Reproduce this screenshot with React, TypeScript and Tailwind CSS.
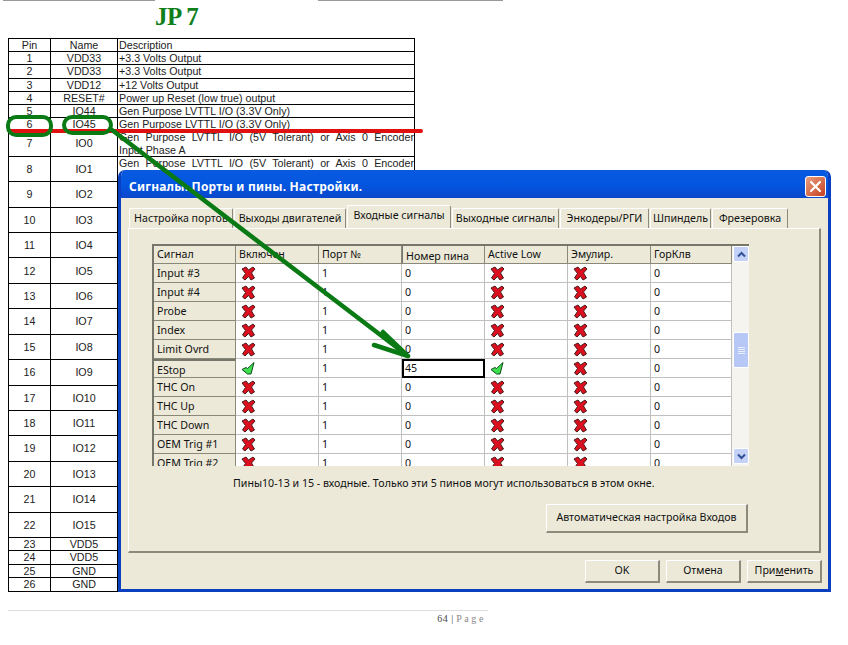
import type { ReactNode } from "react";

const pins = [
  ["1", "VDD33", "+3.3 Volts Output"],
  ["2", "VDD33", "+3.3 Volts Output"],
  ["3", "VDD12", "+12 Volts Output"],
  ["4", "RESET#", "Power up Reset (low true) output"],
  ["5", "IO44", "Gen Purpose LVTTL I/O (3.3V Only)"],
  ["6", "IO45", "Gen Purpose LVTTL I/O (3.3V Only)"],
];

// only rows 7 and 8 show a description, the dialog covers the others
const tallPins = [
  ["7", "IO0", "Input Phase A"],
  ["8", "IO1", "-"],
  ["9", "IO2", ""],
  ["10", "IO3", ""],
  ["11", "IO4", ""],
  ["12", "IO5", ""],
  ["13", "IO6", ""],
  ["14", "IO7", ""],
  ["15", "IO8", ""],
  ["16", "IO9", ""],
  ["17", "IO10", ""],
  ["18", "IO11", ""],
  ["19", "IO12", ""],
  ["20", "IO13", ""],
  ["21", "IO14", ""],
  ["22", "IO15", ""],
];

const powerPins = [
  ["23", "VDD5"],
  ["24", "VDD5"],
  ["25", "GND"],
  ["26", "GND"],
];

const tabs = [
  { label: "Настройка портов", width: "w-[104px]" },
  { label: "Выходы двигателей", width: "w-[112px]" },
  { label: "Входные сигналы", width: "w-[104px]", active: true },
  { label: "Выходные сигналы", width: "w-[107px]" },
  { label: "Энкодеры/РГИ", width: "w-[89px]" },
  { label: "Шпиндель", width: "w-[61px]" },
  { label: "Фрезеровка", width: "w-[76px]" },
];

const signals = [
  "Input #3",
  "Input #4",
  "Probe",
  "Index",
  "Limit Ovrd",
  "EStop",
  "THC On",
  "THC Up",
  "THC Down",
  "OEM Trig #1",
  "OEM Trig #2",
];

function RedCross() {
  return (
    <svg width="15" height="15" viewBox="0 0 15 15" className="block">
      <path
        d="M1 3 L5 1 L7.5 4 L12 1 L14 3 L10.5 7 L13.5 12 L10 14 L7.5 10.5 L4 14 L1.5 12 L4.5 7.5 Z"
        fill="#dc0f1e"
        stroke="#4a1c1c"
        strokeWidth="1"
      />
    </svg>
  );
}

function GreenCheck() {
  return (
    <svg width="15" height="15" viewBox="0 0 15 15" className="block">
      <path
        d="M1 8.5 L5 6.5 L6.5 7.5 L13 1.5 L10 13 L6.5 13 Z"
        fill="#3fe04f"
        stroke="#0c4a1c"
        strokeWidth="1"
      />
    </svg>
  );
}

function HeaderCell({ label, sunken }: { label: string; sunken?: boolean }) {
  return (
    <div
      className={`h-[18px] border-r border-b border-[#8a8878] bg-[#ece9d8] pl-[3px] leading-[17px] ${
        sunken ? "border-l border-l-[#77766a] pt-[2px]" : ""
      }`}
    >
      {label}
    </div>
  );
}

function SignalRow({ name }: { name: string }) {
  const isEstop = name === "EStop";
  const Mark = isEstop ? GreenCheck : RedCross;
  return (
    <>
      <div
        className={`h-[19px] border-b border-r border-[#8a8878] bg-[#ece9d8] pl-[3px] leading-[18px] ${
          isEstop ? "border-t-2 border-t-[#77766a]" : ""
        }`}
      >
        {name}
      </div>
      <div className="flex h-[19px] items-center border-r border-b border-[#c0c0c0] bg-white pl-[5px]">
        <Mark />
      </div>
      <div className="h-[19px] border-r border-b border-[#c0c0c0] bg-white pl-[3px] leading-[18px]">1</div>
      {isEstop ? (
        <div className="h-[19px] border-2 border-black bg-white pl-[1px] leading-[15px]">45</div>
      ) : (
        <div className="h-[19px] border-r border-b border-[#c0c0c0] bg-white pl-[3px] leading-[18px]">0</div>
      )}
      <div className="flex h-[19px] items-center border-r border-b border-[#c0c0c0] bg-white pl-[5px]">
        <Mark />
      </div>
      <div className="flex h-[19px] items-center border-r border-b border-[#c0c0c0] bg-white pl-[5px]">
        <RedCross />
      </div>
      <div className="h-[19px] border-r border-b border-[#c0c0c0] bg-white pl-[3px] leading-[18px]">0</div>
    </>
  );
}

function XpButton({ label, className }: { label: ReactNode; className: string }) {
  return (
    <div
      className={`flex items-center justify-center border-t border-l border-t-white border-l-white border-r-2 border-b-2 border-r-[#8c8a7c] border-b-[#8c8a7c] bg-[#ece9d8] ${className}`}
    >
      {label}
    </div>
  );
}

function Scrollbar() {
  return (
    <div className="flex w-[17px] shrink-0 flex-col bg-[#f5f4ee] pb-[2px] pl-[1px]">
      <div className="flex h-[16px] items-center justify-center rounded-[2px] border border-white bg-[#c3d2f6]">
        <svg width="9" height="7" viewBox="0 0 9 7">
          <path d="M1 5.5 L4.5 2 L8 5.5" fill="none" stroke="#2f4f96" strokeWidth="2" />
        </svg>
      </div>
      <div className="mt-[70px] flex h-[36px] flex-col items-center justify-center gap-[1px] rounded-[2px] border border-white bg-[#b7c8f6]">
        <div className="h-[1px] w-[7px] bg-[#e8eefc]" />
        <div className="h-[1px] w-[7px] bg-[#e8eefc]" />
        <div className="h-[1px] w-[7px] bg-[#e8eefc]" />
        <div className="h-[1px] w-[7px] bg-[#e8eefc]" />
      </div>
      <div className="mt-auto flex h-[16px] items-center justify-center rounded-[2px] border border-white bg-[#c3d2f6]">
        <svg width="9" height="7" viewBox="0 0 9 7">
          <path d="M1 1.5 L4.5 5 L8 1.5" fill="none" stroke="#2f4f96" strokeWidth="2" />
        </svg>
      </div>
    </div>
  );
}

function Dialog() {
  return (
    <div className="absolute top-[170px] left-[118px] flex h-[422px] w-[713px] flex-col overflow-hidden rounded-t-[7px] border-r-[3px] border-b-[3px] border-l-[3px] border-[#0a3fc0] bg-[#ece9d8] font-['Noto_Sans','DejaVu_Sans',sans-serif] text-[10.65px] text-[#111]">
      <div className="mx-[-3px] flex h-[28px] shrink-0 items-center justify-between bg-gradient-to-b from-[#0a5ae0] via-[#0256e0] to-[#0a48cc] pt-[5px] pr-[5px] pl-[11px]">
        <span className="font-['Noto_Sans',sans-serif] text-[12px] font-bold tracking-[0.2px] text-white">
          Сигналы. Порты и пины. Настройки.
        </span>
        <div className="flex h-[21px] w-[21px] items-center justify-center rounded-[3px] border border-white bg-gradient-to-br from-[#e8a080] to-[#c43a18]">
          <svg width="13" height="13" viewBox="0 0 13 13">
            <path d="M2 2 L11 11 M11 2 L2 11" stroke="white" strokeWidth="2.2" strokeLinecap="round" />
          </svg>
        </div>
      </div>

      <div className="flex h-[30px] shrink-0 items-end gap-[1px] pl-2">
        {tabs.map((tab) => (
          <div
            key={tab.label}
            className={`flex items-center justify-center rounded-t-[2px] border-t border-l border-t-white border-l-white border-r border-r-[#8c8a7c] whitespace-nowrap ${tab.width} ${
              tab.active ? "relative z-10 h-[23px] bg-[#ece9d8] pb-[3px]" : "h-[20px] bg-[#ece9d8]"
            }`}
          >
            {tab.label}
          </div>
        ))}
      </div>

      <div className="mr-[7px] ml-[7px] flex h-[325px] shrink-0 flex-col border-t border-l border-t-white border-l-white border-r-2 border-b-2 border-r-[#8c8a7c] border-b-[#8c8a7c] pt-[15px] pl-[23px]">
        <div className="flex h-[222px] w-[597px] shrink-0 overflow-hidden border-t-2 border-l-2 border-t-[#77766a] border-l-[#77766a]">
          <div className="grid h-fit w-[578px] shrink-0 grid-cols-[82px_83px_83px_83px_83px_83px_81px]">
            <HeaderCell label="Сигнал" />
            <HeaderCell label="Включен" />
            <HeaderCell label="Порт №" />
            <HeaderCell label="Номер пина" sunken />
            <HeaderCell label="Active Low" />
            <HeaderCell label="Эмулир." />
            <HeaderCell label="ГорКлв" />
            {signals.map((name) => (
              <SignalRow key={name} name={name} />
            ))}
          </div>
          <Scrollbar />
        </div>
        <div className="mt-[10px] pl-[81px] leading-[14px]">
          Пины10-13 и 15 - входные. Только эти 5 пинов могут использоваться в этом окне.
        </div>
        <div className="mt-[14px] flex justify-end pr-[71px]">
          <XpButton label="Автоматическая настройка Входов" className="h-[29px] w-[202px]" />
        </div>
      </div>

      <div className="mt-[7px] flex gap-[6px] pl-[464px]">
        <XpButton label="OK" className="h-[23px] w-[75px]" />
        <XpButton label="Отмена" className="h-[23px] w-[75px]" />
        <XpButton
          label={
            <span>
              При<span className="underline">м</span>енить
            </span>
          }
          className="h-[23px] w-[75px]"
        />
      </div>
    </div>
  );
}

function Annotations() {
  return (
    <svg width="848" height="645" viewBox="0 0 848 645" className="pointer-events-none absolute top-0 left-0">
      <path d="M10 131 H421" stroke="#e01010" strokeWidth="4" strokeLinecap="round" />
      <rect x="8" y="117" width="43" height="18" rx="8" fill="none" stroke="#0a7a14" strokeWidth="4" />
      <rect x="64" y="117" width="47" height="16" rx="8" fill="none" stroke="#0a7a14" strokeWidth="4" />
      <path
        d="M112 130 L408 356 M408 356 L374 345 M408 356 L383 332"
        fill="none"
        stroke="#0a7a14"
        strokeWidth="4.5"
        strokeLinecap="round"
      />
    </svg>
  );
}

export default function App() {
  return (
    <div className="relative h-[645px] w-[848px] overflow-hidden bg-white font-['Liberation_Sans',sans-serif] text-[10.7px] text-[#222]">
      <div className="flex h-[1px] pl-[3px]">
        <div className="h-[1px] w-[152px] bg-[#999]" />
        <div className="ml-[163px] h-[1px] w-[185px] bg-[#999]" />
      </div>
      <div className="h-[37px] pt-[1px] pl-[155px] font-['Liberation_Serif',serif] text-[25px] leading-[29px] font-bold tracking-[-0.5px] text-[#0f7f1c]">
        JP 7
      </div>

      <div className="ml-2 w-[407px] border border-black">
        <div className="grid h-[13.2px] grid-cols-[42px_67px_1fr] border-b border-black leading-[12px]">
          <div className="border-r border-black text-center">Pin</div>
          <div className="border-r border-black text-center">Name</div>
          <div className="pl-[1px]">Description</div>
        </div>
        {pins.map(([pin, name, desc]) => (
          <div key={pin} className="grid h-[13.2px] grid-cols-[42px_67px_1fr] border-b border-black leading-[12px]">
            <div className="border-r border-black text-center">{pin}</div>
            <div className="border-r border-black text-center">{name}</div>
            <div className="pl-[1px]">{desc}</div>
          </div>
        ))}
        {tallPins.map(([pin, name, second]) => (
          <div key={pin} className="grid h-[25.43px] grid-cols-[42px_67px_1fr] border-b border-black leading-[12.2px]">
            <div className="flex items-center justify-center border-r border-black">{pin}</div>
            <div className="flex items-center justify-center border-r border-black">{name}</div>
            <div className="pl-[1px]">
              {second && (
                <p className="[text-align-last:justify]">Gen Purpose LVTTL I/O (5V Tolerant) or Axis 0 Encoder</p>
              )}
              {second && second !== "-" && <p>{second}</p>}
            </div>
          </div>
        ))}
        {powerPins.map(([pin, name]) => (
          <div key={pin} className="grid h-[13.25px] grid-cols-[42px_67px_1fr] border-b border-black leading-[12px] last:border-b-0">
            <div className="border-r border-black text-center">{pin}</div>
            <div className="border-r border-black text-center">{name}</div>
            <div />
          </div>
        ))}
      </div>

      <div className="mt-[18px] ml-2 w-[480px] border-t border-[#ddd] pr-[2px] text-right font-['Liberation_Serif',serif] text-[10px] text-[#444]">
        <span className="tracking-[0.5px]">64 |</span> <span className="tracking-[2.6px] text-[#888]">Page</span>
      </div>

      <Dialog />
      <Annotations />
    </div>
  );
}
